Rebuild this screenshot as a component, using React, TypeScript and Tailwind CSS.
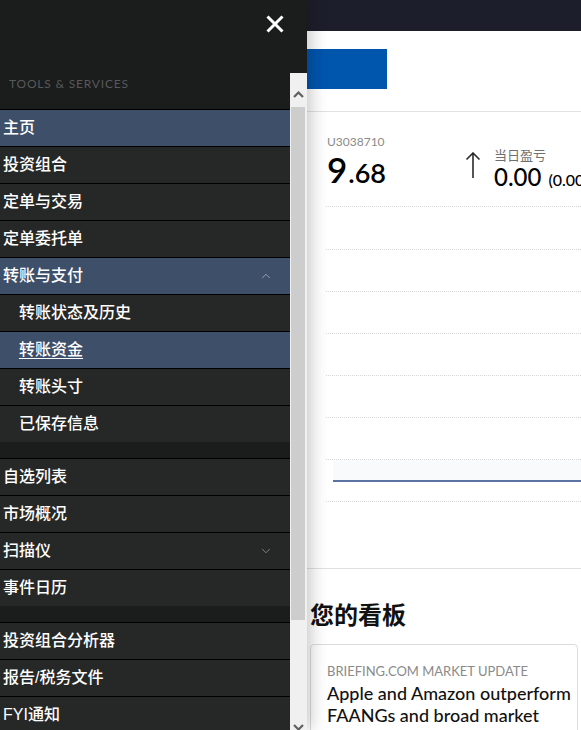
import { ChevronDown, ChevronUp } from "lucide-react";

type Item = {
  label: string;
  active?: boolean;
  sub?: boolean;
  underline?: boolean;
  chevron?: "up" | "down";
};

const groups: Item[][] = [
  [
    { label: "主页", active: true },
    { label: "投资组合" },
    { label: "定单与交易" },
    { label: "定单委托单" },
    { label: "转账与支付", active: true, chevron: "up" },
    { label: "转账状态及历史", sub: true },
    { label: "转账资金", sub: true, active: true, underline: true },
    { label: "转账头寸", sub: true },
    { label: "已保存信息", sub: true },
  ],
  [
    { label: "自选列表" },
    { label: "市场概况" },
    { label: "扫描仪", chevron: "down" },
    { label: "事件日历" },
  ],
  [{ label: "投资组合分析器" }, { label: "报告/税务文件" }, { label: "FYI通知" }],
];

const cjk = "font-['Liberation_Sans','Noto_Sans_CJK_SC',sans-serif]";
const geo = "font-['Lato','Noto_Sans_CJK_SC',sans-serif]";

function MenuRow({ item }: { item: Item }) {
  return (
    <div
      className={`flex h-[37px] items-center border-t border-black pr-[17px] ${
        item.sub ? "pl-[19px]" : "pl-[3px]"
      } ${item.active ? "bg-[#3e4f6a]" : "bg-[#262727]"}`}
    >
      <span className={`flex-1 text-[16px] font-medium leading-[20px] text-white ${item.underline ? "underline underline-offset-[3px]" : ""}`}>
        {item.label}
      </span>
      {item.chevron === "up" && <ChevronUp size={14} strokeWidth={1.5} className="text-[#a4a9b2]" />}
      {item.chevron === "down" && <ChevronDown size={14} strokeWidth={1.5} className="text-[#8d9096]" />}
    </div>
  );
}

function SideMenu() {
  return (
    <aside className={`relative z-10 flex w-[307px] shrink-0 flex-col bg-[#1b1c1c] shadow-[4px_0_16px_rgba(0,0,0,0.22)] ${cjk}`}>
      <div className="flex h-[73px] shrink-0 justify-end pr-[23px] pt-[15px]">
        <svg width="18" height="18" viewBox="0 0 18 18" className="text-white">
          <path d="M1.5 1.5 16.5 16.5M16.5 1.5 1.5 16.5" stroke="currentColor" strokeWidth="3" />
        </svg>
      </div>
      <div className="flex min-h-0 flex-1">
        <nav className="w-[290px] overflow-hidden">
          <div className={`h-[36px] pl-[9px] pt-[3px] text-[12px] leading-[16px] tracking-[0.8px] text-[#57595a] ${geo}`}>
            TOOLS &amp; SERVICES
          </div>
          {groups.map((g, gi) => (
            <div key={gi} className="mb-[16px]">
              {g.map((item) => (
                <MenuRow key={item.label} item={item} />
              ))}
            </div>
          ))}
        </nav>
        <div className="flex w-[17px] flex-col bg-[#f0f0f0]">
          <div className="flex h-[34px] shrink-0 justify-center pt-[18px]">
            <svg width="11" height="7" viewBox="0 0 11 7">
              <path d="M1 6 5.5 1.5 10 6" fill="none" stroke="#606060" strokeWidth="2.2" />
            </svg>
          </div>
          <div className="mx-[1px] h-[513px] w-[14px] shrink-0 bg-[#cdcdcd]" />
          <div className="flex-1" />
          <div className="flex h-[9px] shrink-0 justify-center pt-[3px]">
            <svg width="11" height="7" viewBox="0 0 11 7">
              <path d="M1 1 5.5 5.5 10 1" fill="none" stroke="#606060" strokeWidth="2.2" />
            </svg>
          </div>
        </div>
      </div>
    </aside>
  );
}

function UpArrow() {
  return (
    <svg width="16" height="26" viewBox="0 0 16 26" className="mt-[18px] shrink-0 text-[#2b2b2b]">
      <path d="M8 1v25M1.5 7.5 8 1l6.5 6.5" fill="none" stroke="currentColor" strokeWidth="1.6" />
    </svg>
  );
}

function Dashboard() {
  const rows = [43, 42, 42, 42, 42, 42];
  return (
    <main className={`flex min-w-0 flex-1 flex-col overflow-hidden bg-white ${geo}`}>
      <div className="h-[31px] shrink-0 bg-[#1c1f2b]" />
      <div className="shrink-0 border-b border-[#e2e2e2] pb-[22px] pt-[18px]">
        <div className="h-[40px] w-[80px] bg-[#0055ad]" />
      </div>

      <div className="ml-[19px] flex h-[95px] shrink-0 border-b border-dotted border-[#d6d6d6] pt-[22px]">
        <div className="w-[139px] shrink-0 pl-px">
          <div className="text-[12px] leading-[16px] text-[#8a8a8a]">U3038710</div>
          <div className="mt-[3px] flex items-baseline leading-[32px] text-black">
            <span className="text-[35px] font-semibold">9</span>
            <span className="ml-[1px] text-[27px] font-semibold">.68</span>
          </div>
        </div>
        <UpArrow />
        <div className="ml-[13px] mt-[12px] whitespace-nowrap">
          <div className="text-[13px] leading-[18px] text-[#6f6f6f]">当日盈亏</div>
          <div className="flex items-baseline leading-[26px] text-black">
            <span className="text-[24px] font-medium">0.00</span>
            <span className="ml-[7px] text-[16px] font-medium">(0.00</span>
          </div>
        </div>
      </div>

      <div className="ml-[19px] shrink-0">
        {rows.map((h, i) => (
          <div key={i} style={{ height: h }} className="border-b border-dotted border-[#d6d6d6]" />
        ))}
        <div className="flex h-[42px] flex-col border-b border-dotted border-[#d6d6d6]">
          <div className="ml-[7px] h-[20px] bg-[#f9fafb]" />
          <div className="ml-[7px] h-[2px] bg-[#5a73a0]" />
        </div>
      </div>

      <div className="h-[67px] shrink-0 border-b border-[#e0e0e0]" />

      <div className="shrink-0 px-[3px] pt-[30px]">
        <h2 className="text-[24px] font-bold leading-[30px] text-[#111] font-['Noto_Sans_CJK_SC',sans-serif]">您的看板</h2>
        <div className="mt-[15px] h-[120px] rounded-[4px] border border-[#dcdcdc] px-[16px] pt-[17px]">
          <div className="whitespace-nowrap text-[13px] uppercase leading-[18px] text-[#8a8a8a]">
            Briefing.com Market Update
          </div>
          <div className="mt-[2px] whitespace-nowrap text-[18px] font-medium leading-[22px] text-[#111]">
            Apple and Amazon outperform
            <br />
            FAANGs and broad market
          </div>
        </div>
      </div>
    </main>
  );
}

export default function App() {
  return (
    <div className="flex h-[730px] w-[581px] overflow-hidden bg-white">
      <SideMenu />
      <Dashboard />
    </div>
  );
}
